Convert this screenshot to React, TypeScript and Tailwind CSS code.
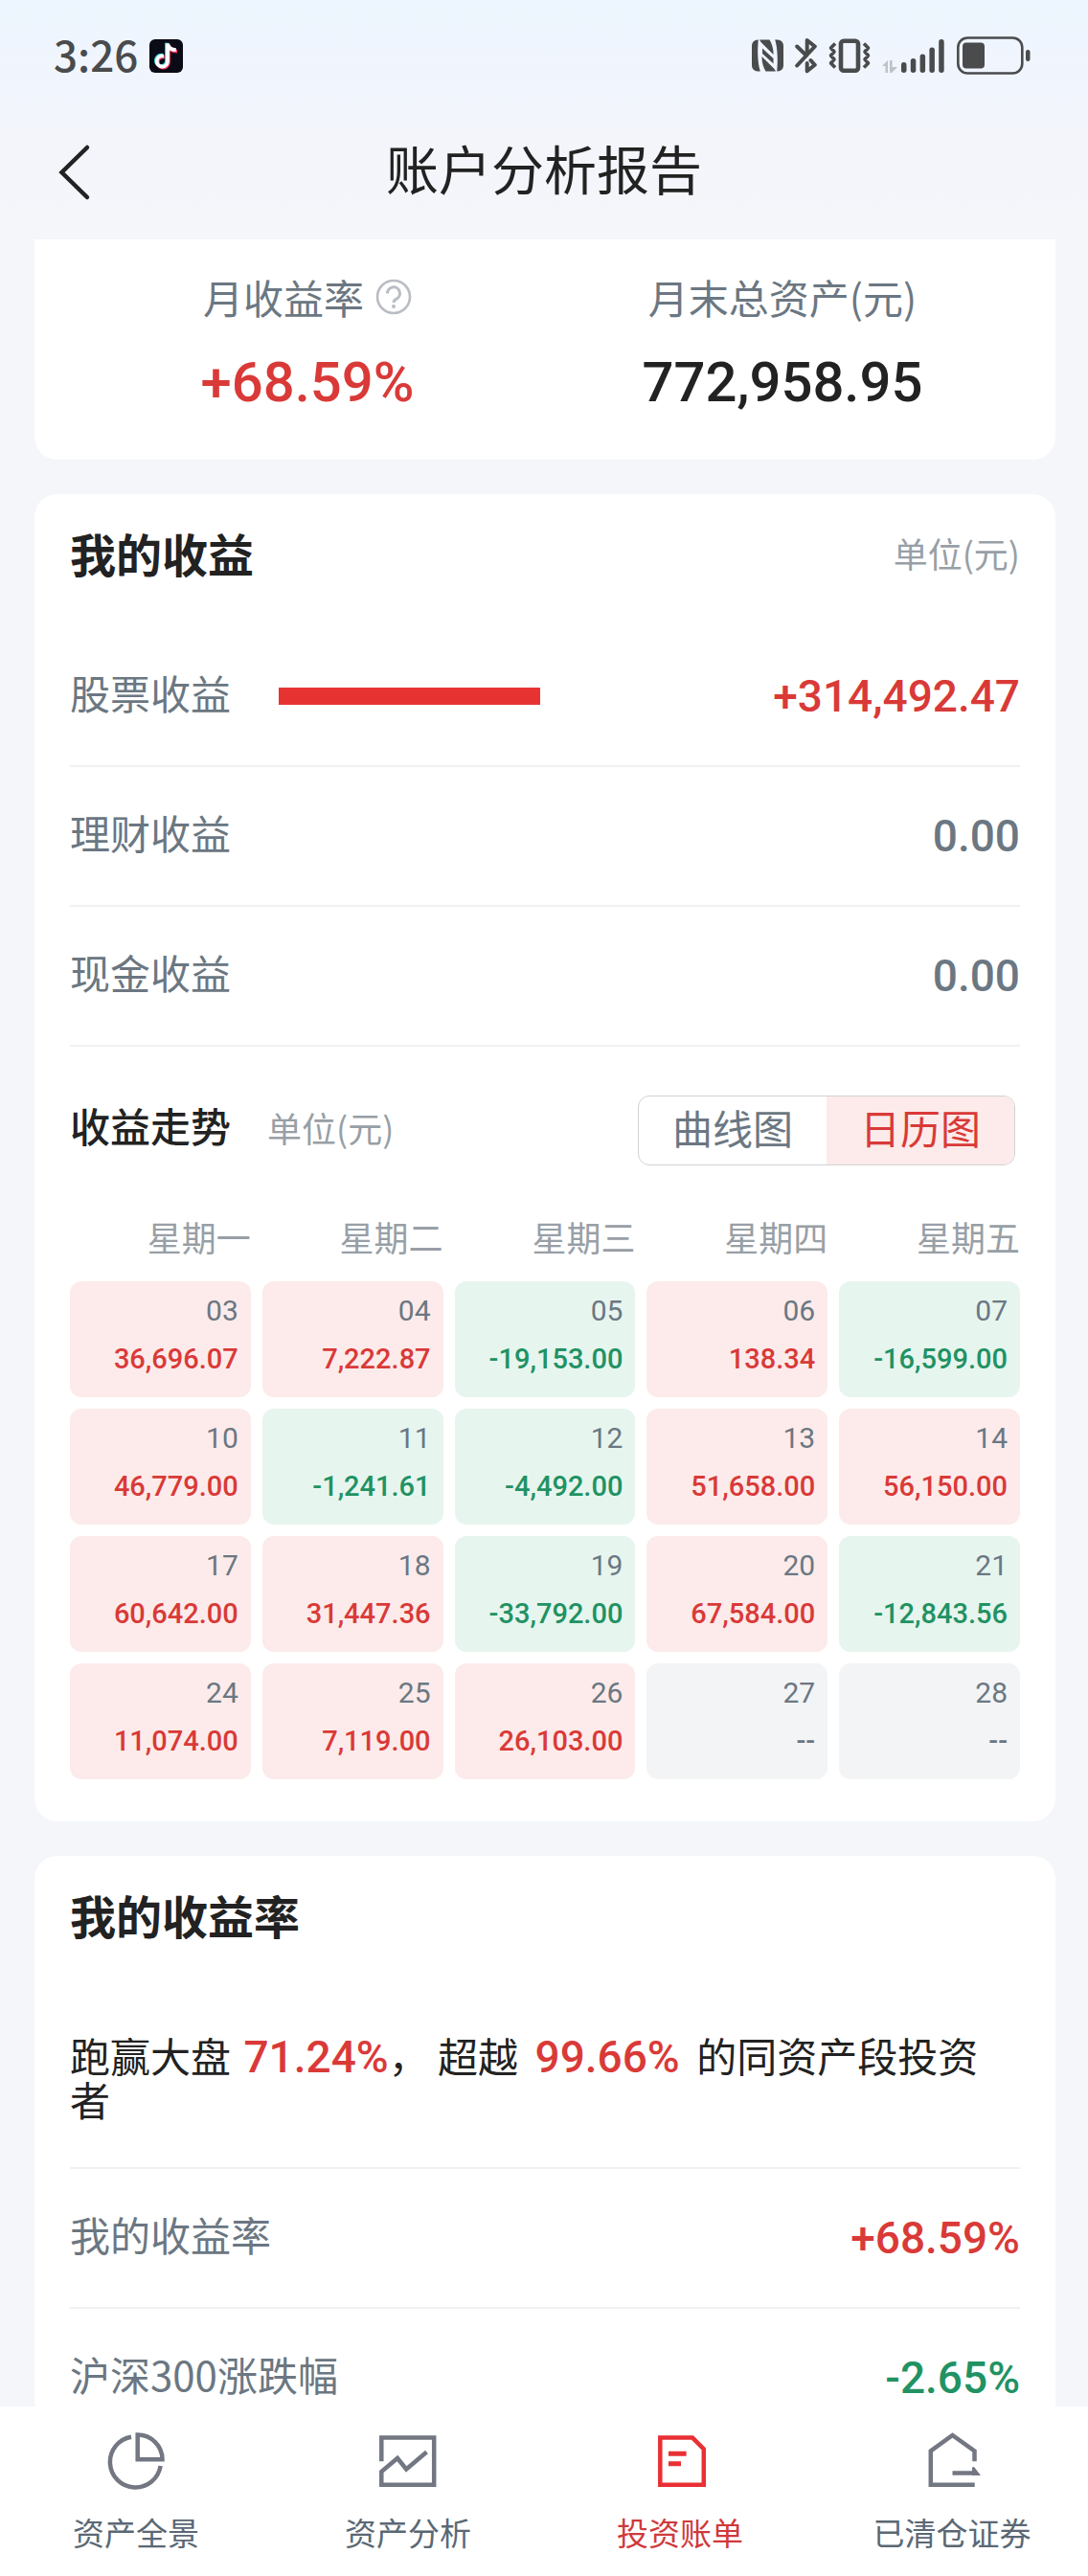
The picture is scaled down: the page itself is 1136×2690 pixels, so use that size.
import clsx from 'clsx'

type Tone = 'up' | 'down' | 'none'

interface DayCell {
  day: string
  value: string
}

const weekdays = ['星期一', '星期二', '星期三', '星期四', '星期五']

const weeks: DayCell[][] = [
  [
    { day: '03', value: '36,696.07' },
    { day: '04', value: '7,222.87' },
    { day: '05', value: '-19,153.00' },
    { day: '06', value: '138.34' },
    { day: '07', value: '-16,599.00' }
  ],
  [
    { day: '10', value: '46,779.00' },
    { day: '11', value: '-1,241.61' },
    { day: '12', value: '-4,492.00' },
    { day: '13', value: '51,658.00' },
    { day: '14', value: '56,150.00' }
  ],
  [
    { day: '17', value: '60,642.00' },
    { day: '18', value: '31,447.36' },
    { day: '19', value: '-33,792.00' },
    { day: '20', value: '67,584.00' },
    { day: '21', value: '-12,843.56' }
  ],
  [
    { day: '24', value: '11,074.00' },
    { day: '25', value: '7,119.00' },
    { day: '26', value: '26,103.00' },
    { day: '27', value: '--' },
    { day: '28', value: '--' }
  ]
]

const getTone = (value: string): Tone => {
  if (value === '--' || value === '0.00') return 'none'
  return value.startsWith('-') ? 'down' : 'up'
}

const textTone: Record<Tone, string> = {
  up: 'text-[#d93a38]',
  down: 'text-[#219263]',
  none: 'text-[#6b7782]'
}

const cellTone: Record<Tone, string> = {
  up: 'bg-[#fcebea]',
  down: 'bg-[#e7f5ef]',
  none: 'bg-[#f3f4f6]'
}

const numberFont = "font-['Roboto','Noto_Sans_CJK_SC',sans-serif] font-medium"

function StatusBar() {
  return (
    <div className="flex h-[116px] items-center justify-between pr-[60px] pl-14 text-[#4a4b4d]">
      <div className="flex items-center gap-3">
        <span className="pb-1 text-[44px] leading-[56px] font-medium">3:26</span>
        <svg width="35" height="35" viewBox="0 0 35 35" fill="none">
          <rect width="35" height="35" rx="6" fill="#0b0b17" />
          <g strokeWidth="3.8">
            <path d="M19 4.5v18.5a5.600 5.600 0 1 1-5.600-5.600h1.500" stroke="#38dcdc" transform="translate(-1 -.8)" />
            <path d="M19 4.5v18.5a5.600 5.600 0 1 1-5.600-5.600h1.500M19 5c.4 4.200 4 6.500 9 6.700" stroke="#f4365b" transform="translate(1 1)" />
            <path d="M19 4.5v18.500a5.600 5.600 0 1 1-5.600-5.600h1.500M19 4.500c.4 4.200 4 6.500 8.800 6.700" stroke="#fff" />
          </g>
        </svg>
      </div>
      <div className="flex items-center">
        <svg width="33" height="34" viewBox="0 0 33 34" fill="currentColor">
          <path d="M6 .5h.8C5.800 10 5.800 24 8.800 33.500H6a6 6 0 0 1-6-6V6.500a6 6 0 0 1 6-6z" />
          <path d="M27 33.500h-.8c1-9.500 1-23.500-2-33h2.800a6 6 0 0 1 6 6v21a6 6 0 0 1-6 6z" />
          <path d="M8 .5h10.500c2.500 4 4 9 4 14.500v1L9.500 3z" />
          <path d="M25 33.500H14.500c-2.500-4-4-9-4-14.500v-1L23.500 31z" />
          <path d="M11 9.500 22.500 20v5.500L11 15z" />
        </svg>
        <svg className="ml-3" width="23" height="38" viewBox="0 0 23 38" fill="none" stroke="currentColor" strokeWidth="4" strokeLinecap="round" strokeLinejoin="round">
          <path d="M2.200 9.500 12 19M2.200 29.500 20.800 9.500 12.700 3v14" />
          <path d="M16.500 24l4.300 4.800-8.100 6.400V27" />
        </svg>
        <svg className="ml-3" width="44" height="38" viewBox="0 0 44 38" fill="none" stroke="currentColor">
          <rect x="13" y="3.800" width="18" height="31" rx="3" strokeWidth="4.600" />
          <path d="M7 6.500l-4.500 4.500 3.500 4-3.500 4 3.500 4-3.500 4L7 31.500M37 6.500l4.500 4.500-3.500 4 3.500 4-3.500 4 3.500 4-4.500 4.500" strokeWidth="3.600" strokeLinejoin="round" transform="matrix(-1 0 0 1 44 0) translate(44 0) scale(-1 1)" />
        </svg>
        <svg className="ml-3" width="66" height="36" viewBox="0 0 66 36" fill="currentColor">
          <path d="M0 29l6-6v13H3.500v-7zM8 23h2.500v7H16l-6 6H8z" opacity=".3" />
          <rect x="20" y="25" width="5.500" height="11" rx="2.700" />
          <rect x="29.800" y="21" width="5.500" height="15" rx="2.700" />
          <rect x="39.600" y="16.500" width="5.500" height="19.500" rx="2.700" />
          <rect x="49.400" y="9.500" width="5.500" height="26.500" rx="2.700" />
          <rect x="59.200" y="1" width="5.500" height="35" rx="2.700" />
        </svg>
        <svg className="ml-3" width="77" height="40" viewBox="0 0 77 40" fill="none">
          <rect x="1.300" y="1.500" width="67" height="37" rx="10" stroke="currentColor" strokeWidth="2.600" />
          <rect x="6" y="6.500" width="23" height="27" rx="4" fill="currentColor" />
          <rect x="72" y="14" width="4.500" height="12" rx="2.200" fill="currentColor" />
        </svg>
      </div>
    </div>
  )
}

function AmountRow({ label, value, bar }: { label: string; value: string; bar?: boolean }) {
  return (
    <div className="flex h-[146px] items-center border-b-2 border-[#f0f1f2]">
      <span className="pb-2 text-[42px] leading-[50px] text-[#6b7782]">{label}</span>
      {bar && <span className="ml-[50px] h-[18px] w-[273px] bg-[#e73433]" />}
      <span className={clsx('ml-auto text-[46px] leading-[50px]', numberFont, textTone[getTone(value)])}>
        {value}
      </span>
    </div>
  )
}

function ProfitCalendar() {
  return (
    <div className="-mx-3">
      <table className="w-full table-fixed border-separate border-spacing-3 text-right">
        <thead>
          <tr>
            {weekdays.map((name) => (
              <th key={name} className="p-0 pb-1 text-[36px] leading-[62px] font-normal text-[#989fa6]">
                {name}
              </th>
            ))}
          </tr>
        </thead>
        <tbody>
          {weeks.map((week) => (
            <tr key={week[0].day}>
              {week.map(({ day, value }) => (
                <td key={day} className={clsx('h-[121px] rounded-xl px-[13px] pt-1.5 pb-[15px]', cellTone[getTone(value)])}>
                  <div className="font-['Roboto',sans-serif] text-[30px] leading-[50px] text-[#6b7782]">{day}</div>
                  <div className={clsx('text-[29px] leading-[50px]', numberFont, textTone[getTone(value)])}>{value}</div>
                </td>
              ))}
            </tr>
          ))}
        </tbody>
      </table>
    </div>
  )
}

const tabs = [
  {
    label: '资产全景',
    icon: (
      <>
        <path d="M26 4.800A26.500 26.500 0 1 0 56.600 35" />
        <path d="M32.700 2.600A26 25.700 0 0 1 58.500 28.200H32.700z" />
      </>
    )
  },
  {
    label: '资产分析',
    icon: <path d="M3.300 30.300V5.600H58.200V54.700H3.300V41L20 27l9.200 11.500L50.500 20.500" />
  },
  {
    label: '投资账单',
    active: true,
    icon: (
      <>
        <path d="M10.300 5.600H44L55.800 17.500V54.700H10.300z" />
        <path d="M19 22.200H37.600M19 32.800H32" strokeWidth="5" />
      </>
    )
  },
  {
    label: '已清仓证券',
    icon: (
      <>
        <path d="M54.500 30.300V19.500L31.500 3 8.800 19.500V54.700H54.700" />
        <path d="M31.500 42.500H55" />
        <path d="M52 36.500l2-.5 7 9H52z" fill="currentColor" stroke="none" />
      </>
    )
  }
]

function TabBar() {
  return (
    <nav className="grid h-[177px] shrink-0 grid-cols-4 bg-white">
      {tabs.map(({ label, icon, active }) => (
        <a
          key={label}
          href="#"
          className={clsx('flex flex-col items-center pt-[27px]', active ? 'text-[#d0393b]' : 'text-[#5b6874]')}
        >
          <svg
            className={active ? 'text-[#e93035]' : 'text-[#737782]'}
            width="62"
            height="60"
            viewBox="0 0 62 60"
            fill="none"
            stroke="currentColor"
            strokeWidth="4.500"
          >
            {icon}
          </svg>
          <span className="mt-5 text-[33px] leading-[48px]">{label}</span>
        </a>
      ))}
    </nav>
  )
}

export default function App() {
  return (
    <div className="flex h-screen flex-col bg-[#f4f6fa] bg-[linear-gradient(#edf6fe_0px,#f0f5fe_60px,#f3f5fb_140px,#f4f6fa_240px)] font-['Noto_Sans_CJK_SC',sans-serif] text-[#222]">
      <StatusBar />
      <header className="relative mb-3.5 flex h-[120px] shrink-0 items-center justify-center">
        <button type="button" aria-label="返回" className="absolute inset-y-0 left-0 flex items-center pt-2 pr-8 pl-[60px]">
          <svg width="36" height="60" viewBox="0 0 36 60" fill="none" stroke="currentColor" strokeWidth="4.500" strokeLinecap="round">
            <path d="M31 4 4.500 30 31 56" />
          </svg>
        </button>
        <h1 className="pb-1 text-[55px] leading-[80px]">账户分析报告</h1>
      </header>

      <main className="flex min-h-0 flex-1 flex-col gap-9 overflow-y-auto pr-[34px] pl-9 [scrollbar-width:none]">
        <section className="grid h-[230px] shrink-0 grid-cols-2 rounded-b-3xl bg-white px-[37px] pt-[30px] text-center">
          <div>
            <div className="flex items-center justify-center gap-3 text-[42px] leading-[60px] text-[#6b7782]">
              月收益率
              <button type="button" aria-label="说明" className="text-[#b9bdc4]">
                <svg width="38" height="38" viewBox="0 0 38 38" fill="none" stroke="currentColor" strokeWidth="2.600">
                  <circle cx="19" cy="19" r="17" />
                  <path d="M12.500 15.500a6.500 6.500 0 1 1 9.500 5.600c-2 1.100-3 2-3 3.900" strokeWidth="3" />
                  <circle cx="19" cy="29" r="2" fill="currentColor" stroke="none" />
                </svg>
              </button>
            </div>
            <div className={clsx('mt-6 text-[58px] leading-[70px]', numberFont, textTone.up)}>+68.59%</div>
          </div>
          <div>
            <div className="text-[42px] leading-[60px] text-[#6b7782]">月末总资产(元)</div>
            <div className={clsx('mt-6 text-[58px] leading-[70px]', numberFont)}>772,958.95</div>
          </div>
        </section>

        <section className="shrink-0 rounded-3xl bg-white px-[37px] pt-[25px] pb-8">
          <div className="flex items-center justify-between">
            <h2 className="text-[48px] leading-[72px] font-bold">我的收益</h2>
            <span className="text-[36px] leading-[72px] text-[#989fa6]">单位(元)</span>
          </div>
          <div className="mt-[42px]">
            <AmountRow label="股票收益" value="+314,492.47" bar />
            <AmountRow label="理财收益" value="0.00" />
            <AmountRow label="现金收益" value="0.00" />
          </div>

          <div className="mt-[51px] flex items-center pr-[5px]">
            <h3 className="pb-3 text-[42px] leading-[60px] font-medium">收益走势</h3>
            <span className="ml-[38px] pb-2 text-[36px] leading-[60px] text-[#989fa6]">单位(元)</span>
            <div className="ml-auto grid h-[73px] w-[394px] grid-cols-2 overflow-hidden rounded-xl border border-[#d0d2d4] text-[42px] leading-[60px]">
              <button type="button" className="pb-2 text-[#6b7782]">曲线图</button>
              <button type="button" className="bg-[#fcebea] pb-2 text-[#d93a38]">日历图</button>
            </div>
          </div>
          <div className="mt-[31px]">
            <ProfitCalendar />
          </div>
        </section>

        <section className="shrink-0 rounded-3xl bg-white px-[37px] pt-[25px]">
          <h2 className="text-[48px] leading-[72px] font-bold">我的收益率</h2>
          <p className="mt-[89px] border-b-2 border-[#f0f1f2] pr-1 pb-[49px] text-[42px] leading-[44px]">
            跑赢大盘{' '}
            <span className={clsx('ml-1 text-[46px]', numberFont, textTone.up)}>71.24%</span>
            ， 超越{' '}
            <span className={clsx('mx-2 text-[46px]', numberFont, textTone.up)}>99.66%</span>
            {' '}的同资产段投资者
          </p>
          <AmountRow label="我的收益率" value="+68.59%" />
          <AmountRow label="沪深300涨跌幅" value="-2.65%" />
        </section>
      </main>

      <TabBar />
    </div>
  )
}
